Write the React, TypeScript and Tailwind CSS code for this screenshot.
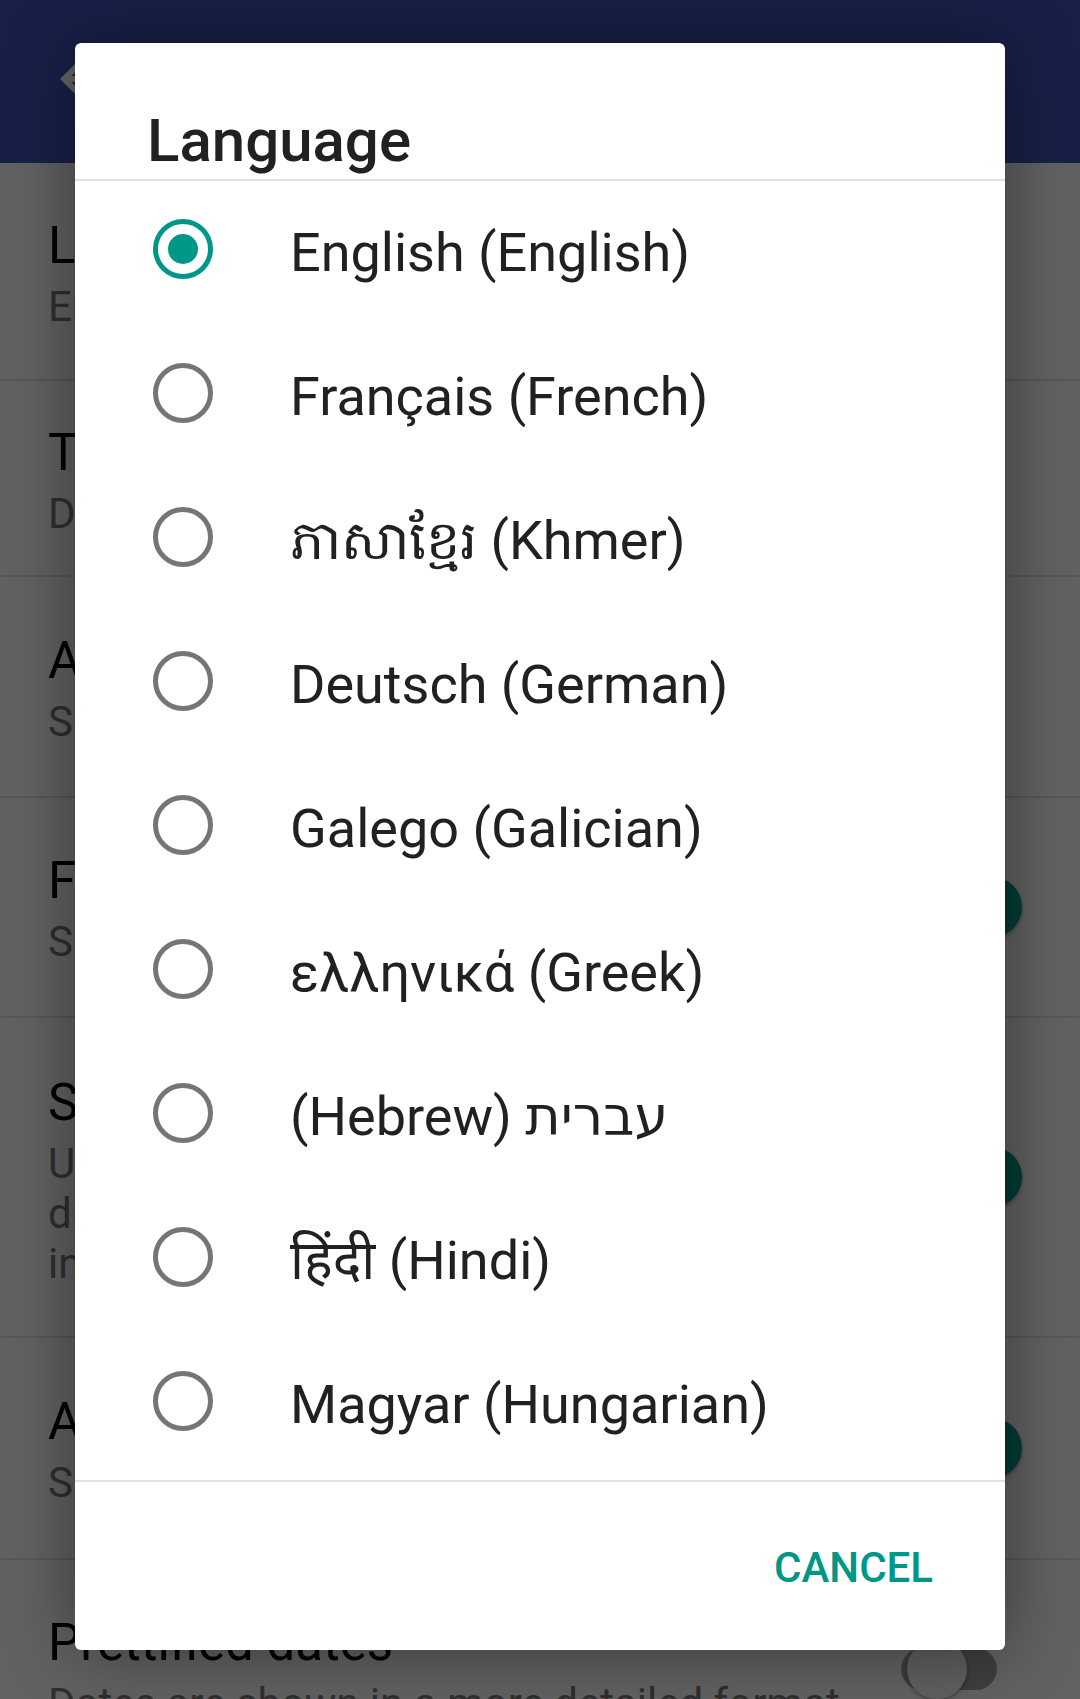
import React from "react";

type Setting = {
    title: string;
    lines: string[];
    h: string;
    pt: string;
    toggle?: "on" | "off";
};

const settings: Setting[] = [
    { title: "Language", lines: ["English"], h: "h-[218px]", pt: "pt-[54px]" },
    { title: "Theme", lines: ["Default"], h: "h-[196px]", pt: "pt-[43px]" },
    { title: "Accent color", lines: ["Select the accent color of the app"], h: "h-[221px]", pt: "pt-[55px]" },
    { title: "Full screen", lines: ["Show content in full screen"], h: "h-[220px]", pt: "pt-[54px]", toggle: "on" },
    {
        title: "Swipe actions",
        lines: ["Use swipe gestures to interact with", "discussions, vote and share stories", "in the list"],
        h: "h-[320px]",
        pt: "pt-[56px]",
        toggle: "on",
    },
    { title: "Auto load comments", lines: ["Show comments when a story is opened"], h: "h-[222px]", pt: "pt-[55px]", toggle: "on" },
    { title: "Prettified dates", lines: ["Dates are shown in a more detailed format"], h: "h-[220px]", pt: "pt-[54px]", toggle: "off" },
];

const languages = [
    "English (English)",
    "Français (French)",
    "ភាសាខ្មែរ (Khmer)",
    "Deutsch (German)",
    "Galego (Galician)",
    "ελληνικά (Greek)",
    "(Hebrew) עברית",
    "हिंदी (Hindi)",
    "Magyar (Hungarian)",
];

const Switch = ({ on }: { on: boolean }) => (
    <div className="relative w-[121px] h-[60px] mr-[58px] shrink-0">
        <div
            className={`absolute right-[25px] top-[9px] w-[96px] h-[42px] rounded-full ${on ? "bg-[#80cbc4]" : "bg-[#9e9e9e]"}`}
        />
        <div
            className={`absolute top-0 w-[60px] h-[60px] rounded-full shadow-[0_2px_4px_rgba(0,0,0,0.35)] ${on ? "right-0 bg-[#009688]" : "left-[6px] bg-[#f1f1f1]"}`}
        />
    </div>
);

const Radio = ({ checked }: { checked: boolean }) => (
    <div
        className={`w-[60px] h-[60px] rounded-full border-[5px] flex items-center justify-center shrink-0 ${checked ? "border-[#009688]" : "border-[#757575]"}`}
    >
        {checked && <div className="w-[30px] h-[30px] rounded-full bg-[#009688]" />}
    </div>
);

export default function App() {
    return (
        <div className="relative w-[1080px] h-[1699px] overflow-hidden bg-[#f5f5f5] font-['Roboto','Noto_Sans','DejaVu_Sans',sans-serif]">
            {/* App bar */}
            <div className="h-[163px] bg-[#3F51B5] flex items-start pt-[43px] pl-[48px]">
                <svg width="72" height="72" viewBox="0 0 24 24" fill="#ffffff">
                    <path d="M20 11H7.83l5.59-5.59L12 4l-8 8 8 8 1.41-1.41L7.83 13H20v-2z" />
                </svg>
                <span className="ml-[96px] mt-[8px] text-white text-[60px] leading-[56px] font-medium">Settings</span>
            </div>

            {/* Settings list */}
            {settings.map((s) => (
                <div key={s.title} className={`${s.h} flex border-b-2 border-[#dadada]`}>
                    <div className={`flex-1 pl-[48px] ${s.pt}`}>
                        <div className="text-[51px] leading-[58px] text-black">{s.title}</div>
                        <div className="mt-[7px]">
                            {s.lines.map((l) => (
                                <div key={l} className="text-[42px] leading-[50px] text-[#757575]">
                                    {l}
                                </div>
                            ))}
                        </div>
                    </div>
                    {s.toggle && (
                        <div className="self-center">
                            <Switch on={s.toggle === "on"} />
                        </div>
                    )}
                </div>
            ))}

            {/* Dialog */}
            <div className="absolute inset-0 bg-black/60 pt-[43px] pl-[75px]">
                <div className="w-[930px] h-[1607px] bg-white rounded-[6px] shadow-[0_0_70px_rgba(0,0,0,0.45)] flex flex-col overflow-hidden">
                    <div className="h-[136px] shrink-0 pt-[63px] pl-[72px] text-[60px] leading-[70px] font-medium text-[#212121]">
                        Language
                    </div>
                    <div className="h-[2px] shrink-0 bg-[#e0e0e0]" />
                    <div className="h-[1299px] shrink-0 overflow-hidden">
                        <div className="-mt-[4px]">
                            {languages.map((lang, i) => (
                                <div key={lang} className="h-[144px] flex items-center pl-[78px]">
                                    <Radio checked={i === 0} />
                                    <span className="ml-[77px] pt-[7px] text-[54px] leading-[63px] text-[#212121] whitespace-nowrap">
                                        {lang}
                                    </span>
                                </div>
                            ))}
                        </div>
                    </div>
                    <div className="h-[2px] shrink-0 bg-[#e0e0e0]" />
                    <div className="flex-1 flex justify-end items-start pt-[61px] pr-[72px]">
                        <span className="text-[42px] leading-[50px] font-medium text-[#009688]">CANCEL</span>
                    </div>
                </div>
            </div>
        </div>
    );
}
